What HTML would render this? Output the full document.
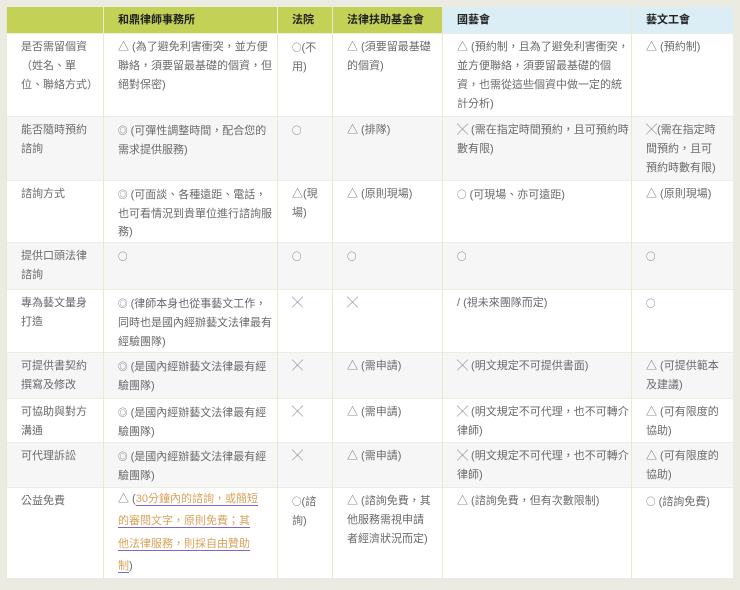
<!DOCTYPE html>
<html><head><meta charset="utf-8"><style>
body{margin:0;width:740px;height:590px;background:#ecebe2;font-family:"Liberation Sans","Noto Sans CJK TC",sans-serif;overflow:hidden}
table{position:absolute;left:6px;top:7px;width:726px;border-collapse:collapse;table-layout:fixed;background:#fff}
td,th{vertical-align:top;font-size:11px;line-height:19px;color:#6a6a6a;padding:4px 0 0 14px;border-left:1px solid #e6ead0;text-align:left;font-weight:normal;overflow:hidden;white-space:nowrap}
th{background:#c3d156;color:#222;font-weight:bold;height:26px;padding:0 0 0 14px;vertical-align:middle;line-height:25px}
th.b{background:#dbeef6}
tr.g td{background:#f6f6f6}
tr td{border-top:1px solid #eceee0}
.s{font-family:"Noto Sans CJK TC",sans-serif;font-size:9.5px}
a{color:#d9a25a;text-decoration:underline;text-decoration-color:#7b68c8;text-underline-offset:3px}
</style></head><body>
<table>
<colgroup><col style="width:97px"><col style="width:174px"><col style="width:55px"><col style="width:110px"><col style="width:189px"><col style="width:101px"></colgroup>
<tr><th></th><th>和鼎律師事務所</th><th>法院</th><th>法律扶助基金會</th><th class="b">國藝會</th><th class="b">藝文工會</th></tr>
<tr style="height:83px"><td>是否需留個資<br>（姓名、單<br>位、聯絡方式）</td><td>△ (為了避免利害衝突，並方便<br>聯絡，須要留最基礎的個資，但<br>絕對保密)</td><td><span class="s">○</span>(不<br>用)</td><td>△ (須要留最基礎<br>的個資)</td><td>△ (預約制，且為了避免利害衝突，<br>並方便聯絡，須要留最基礎的個<br>資，也需從這些個資中做一定的統<br>計分析)</td><td>△ (預約制)</td></tr>
<tr class="g" style="height:64px"><td>能否隨時預約<br>諮詢</td><td><span class="s">◎</span> (可彈性調整時間，配合您的<br>需求提供服務)</td><td><span class="s">○</span></td><td>△ (排隊)</td><td>╳ (需在指定時間預約，且可預約時<br>數有限)</td><td>╳(需在指定時<br>間預約，且可<br>預約時數有限)</td></tr>
<tr style="height:61px"><td>諮詢方式</td><td style="line-height:18.5px"><span class="s">◎</span> (可面談、各種遠距、電話，<br>也可看情況到貴單位進行諮詢服<br>務)</td><td>△(現<br>場)</td><td>△ (原則現場)</td><td><span class="s">○</span> (可現場、亦可遠距)</td><td>△ (原則現場)</td></tr>
<tr class="g" style="height:47px"><td>提供口頭法律<br>諮詢</td><td><span class="s">○</span></td><td><span class="s">○</span></td><td><span class="s">○</span></td><td><span class="s">○</span></td><td><span class="s">○</span></td></tr>
<tr style="height:63px"><td>專為藝文量身<br>打造</td><td><span class="s">◎</span> (律師本身也從事藝文工作，<br>同時也是國內經辦藝文法律最有<br>經驗團隊)</td><td>╳</td><td>╳</td><td>/ (視未來團隊而定)</td><td><span class="s">○</span></td></tr>
<tr class="g" style="height:46px"><td>可提供書契約<br>撰寫及修改</td><td><span class="s">◎</span> (是國內經辦藝文法律最有經<br>驗團隊)</td><td>╳</td><td>△ (需申請)</td><td>╳ (明文規定不可提供書面)</td><td>△ (可提供範本<br>及建議)</td></tr>
<tr style="height:44px"><td>可協助與對方<br>溝通</td><td><span class="s">◎</span> (是國內經辦藝文法律最有經<br>驗團隊)</td><td>╳</td><td>△ (需申請)</td><td>╳ (明文規定不可代理，也不可轉介<br>律師)</td><td>△ (可有限度的<br>協助)</td></tr>
<tr class="g" style="height:45px"><td>可代理訴訟</td><td><span class="s">◎</span> (是國內經辦藝文法律最有經<br>驗團隊)</td><td>╳</td><td>△ (需申請)</td><td>╳ (明文規定不可代理，也不可轉介<br>律師)</td><td>△ (可有限度的<br>協助)</td></tr>
<tr style="height:91px"><td>公益免費</td><td style="line-height:22.5px;padding-top:0">△ (<a>30分鐘內的諮詢，或簡短</a><br><a>的審閱文字，原則免費；其</a><br><a>他法律服務，則採自由贊助</a><br><a>制</a>)</td><td><span class="s">○</span>(諮<br>詢)</td><td>△ (諮詢免費，其<br>他服務需視申請<br>者經濟狀況而定)</td><td>△ (諮詢免費，但有次數限制)</td><td><span class="s">○</span> (諮詢免費)</td></tr>
</table>
</body></html>
